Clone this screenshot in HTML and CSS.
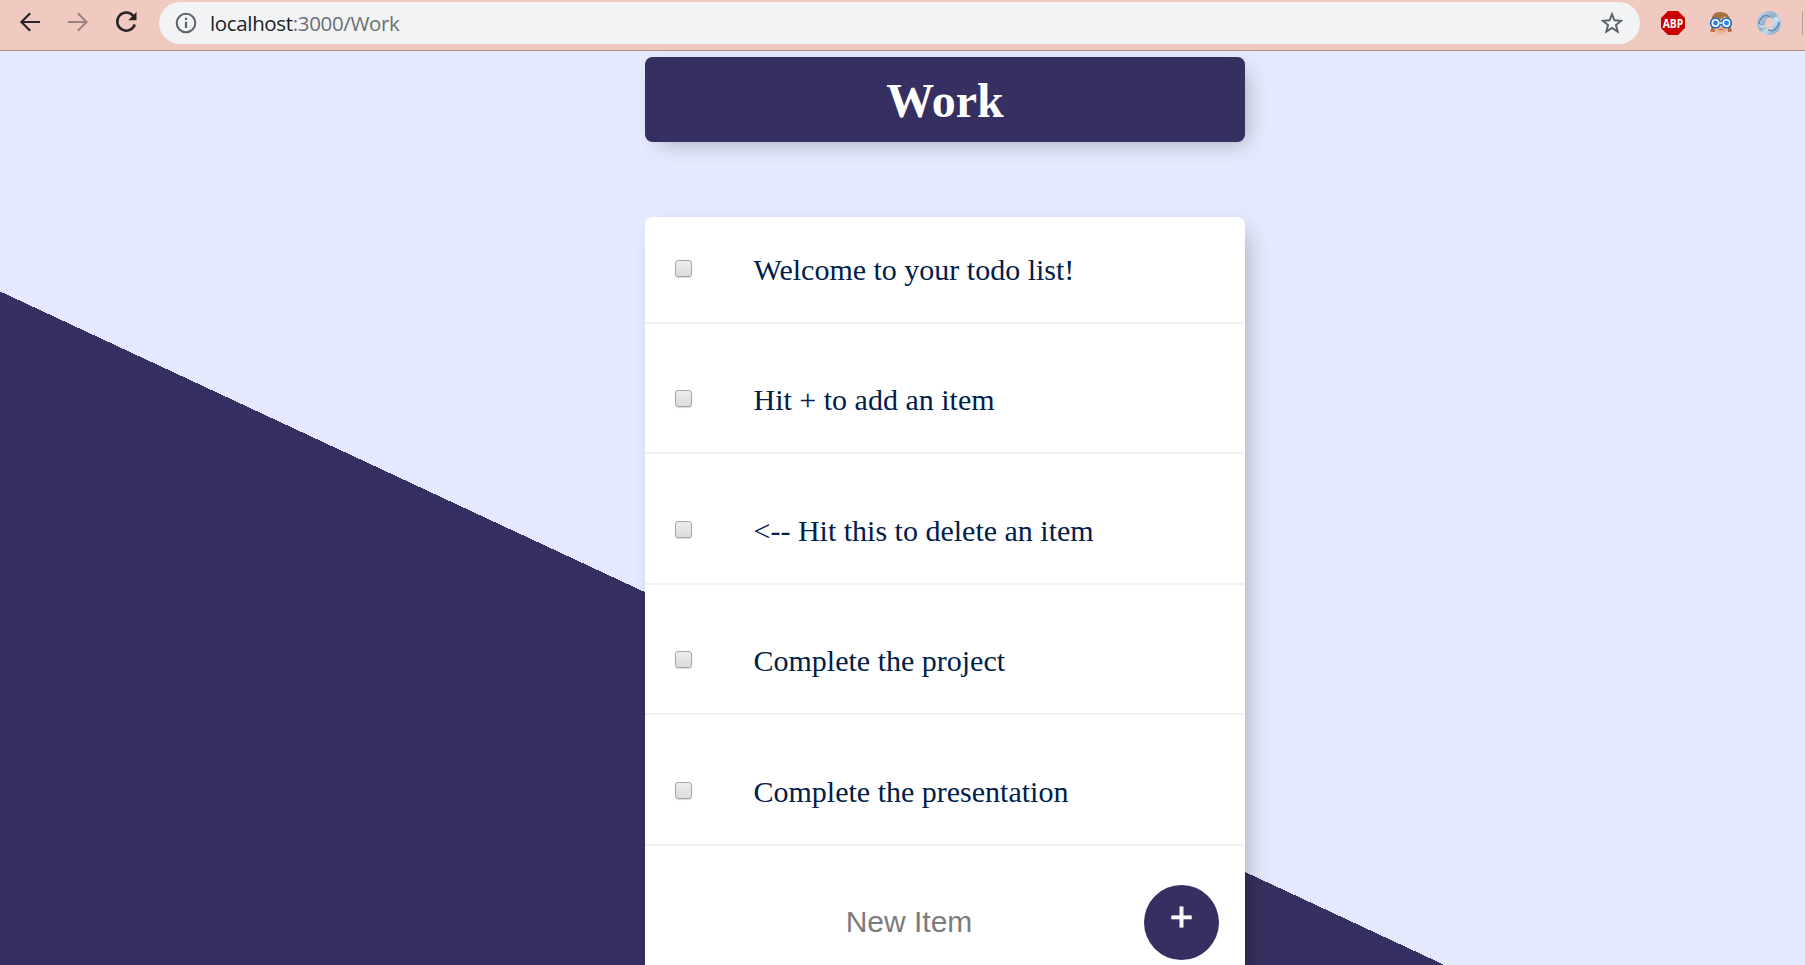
FILE: index.html
```
<!DOCTYPE html>
<html lang="en">
<head>
<meta charset="utf-8">
<title>Work</title>
<link rel="stylesheet" href="styles.css">
</head>
<body>
<header class="toolbar">
  <nav class="nav">
    <svg class="nav-icon" viewBox="0 0 24 24"><path d="M22 12H4M12.200 3.200 3.400 12l8.800 8.800" fill="none" stroke="#272525" stroke-width="2.200"/></svg>
    <svg class="nav-icon" viewBox="0 0 24 24"><path d="M2 12h18M11.800 3.200 20.600 12l-8.800 8.800" fill="none" stroke="#9a8380" stroke-width="2"/></svg>
    <svg class="nav-icon" viewBox="0 0 24 24"><path d="M19.300 6A9 9 0 1 0 20.800 14.500" fill="none" stroke="#272525" stroke-width="2.500"/><path d="M22.500 2v8.200h-8.200z" fill="#272525"/></svg>
  </nav>
  <div class="omnibox">
    <svg class="info" viewBox="0 0 22 22"><circle cx="11" cy="11" r="9.300" fill="none" stroke="#5f6368" stroke-width="2"/><path d="M11 9.800v6.200M11 5.700v2.200" stroke="#5f6368" stroke-width="2.200"/></svg>
    <span class="url"><span class="host">localhost</span>:3000/Work</span>
    <svg class="star" viewBox="0 0 22 22"><path d="M11 2.200l2.500 6.100 6.600.5-5.100 4.300 1.600 6.400L11 16l-5.600 3.500L7 13.100 1.900 8.800l6.600-.5z" fill="none" stroke="#5f6368" stroke-width="2"/></svg>
  </div>
  <div class="extensions">
    <svg class="ext" viewBox="0 0 24 24"><path d="M7 0h10l7 7v10l-7 7H7l-7-7V7z" fill="#c90000"/><text x="12" y="17" text-anchor="middle" class="abp" textLength="20.500" lengthAdjust="spacingAndGlyphs">ABP</text></svg>
    <svg class="ext" viewBox="0 0 24 24"><path d="M1 20.500q2-3 1.500-10Q2 1 11 1t10 8q0 7 2 11.500l-4 .5-1-12H6v12z" fill="#a96f43"/><path d="M5 8q7 1 11-3 1 3 3 4v7q0 6-7 6t-7-6z" fill="#edb08f"/><path d="M5 24q7-5 14 0z" fill="#f3b7a3"/><path d="M9.500 18.500h5" stroke="#bd6b59" stroke-width="1.200"/><g fill="#2684ed" stroke="#1763b8" stroke-width="1.200"><circle cx="6.500" cy="12" r="5"/><circle cx="17.500" cy="12" r="5"/></g><g fill="#2684ed" stroke="#fff" stroke-width="1.500"><circle cx="6.500" cy="12" r="3.200"/><circle cx="17.500" cy="12" r="3.200"/></g><path d="M10.500 12h3" stroke="#fff" stroke-width="1.500"/></svg>
    <svg class="ext" viewBox="0 0 24 24"><defs><linearGradient id="steel" x1="0" y1="0" x2="1" y2="1"><stop offset="0" stop-color="#c6dae9"/><stop offset=".45" stop-color="#8fb0cc"/><stop offset=".6" stop-color="#c9dcea"/><stop offset="1" stop-color="#668fb5"/></linearGradient></defs><path fill-rule="evenodd" d="M12 0a12 12 0 1 1 0 24 12 12 0 0 1 0-24zM13 6Q7.500 8 8.500 14q.5 3 2.500 4.500 5.500-2.500 4.500-8.500Q15 7 13 6z" fill="url(#steel)"/><path d="M13 6Q9 3 5.500 6T2 13M11 18.500q4 3 7.500-.5T22 11" stroke="#5c86ae" stroke-width="1.300" fill="none"/><path d="M8.500 14q-3 3-6 1M15.500 10q2-4 5-2" stroke="#e3eef6" stroke-width="1.200" fill="none"/></svg>
  </div>
  <span class="divider"></span>
</header>
<main class="page">
  <h1 class="heading">Work</h1>
  <section class="list">
    <label class="item"><input class="check" type="checkbox"><span>Welcome to your todo list!</span></label>
    <label class="item"><input class="check" type="checkbox"><span>Hit + to add an item</span></label>
    <label class="item"><input class="check" type="checkbox"><span>&lt;-- Hit this to delete an item</span></label>
    <label class="item"><input class="check" type="checkbox"><span>Complete the project</span></label>
    <label class="item"><input class="check" type="checkbox"><span>Complete the presentation</span></label>
    <form class="new-item">
      <input class="entry" type="text" placeholder="New Item">
      <button class="add" type="button">+</button>
    </form>
  </section>
</main>
</body>
</html>
```
FILE: styles.css
```
* { box-sizing: border-box; }
body {
  margin: 0;
  height: 965px;
  overflow: hidden;
  display: flex;
  flex-direction: column;
  font-family: "Liberation Serif", "Times New Roman", serif;
}
.toolbar {
  height: 51px;
  flex: none;
  display: flex;
  align-items: flex-start;
  padding-left: 18px;
  background: #f0c9c1;
  border-bottom: 1px solid #a98c87;
}
.nav { display: flex; gap: 24px; padding-top: 10px; width: 141px; }
.nav-icon { width: 24px; height: 24px; }
.omnibox {
  width: 1481px;
  height: 42px;
  margin-top: 2px;
  padding: 0 17px 0 16px;
  border-radius: 21px;
  background: #f1f3f4;
  display: flex;
  align-items: center;
}
.info { width: 22px; height: 22px; }
.url {
  flex: 1;
  margin-left: 13px;
  padding-top: 1px;
  font: 20.5px/41px "Open Sans", "Noto Sans", sans-serif;
  letter-spacing: -0.35px;
  color: #6b6f73;
}
.host { color: #202124; }
.star { width: 22px; height: 22px; }
.extensions { display: flex; gap: 24px; padding: 11px 0 0 21px; }
.ext { width: 24px; height: 24px; overflow: visible; }
.abp { font: bold 13px "Open Sans", sans-serif; fill: #fff; }
.divider { width: 1px; height: 24px; margin: 11px 2px 0 auto; background: #b59a96; }
.page {
  flex: 1;
  min-height: 0;
  overflow: hidden;
  padding: 6px 560px 0 645px;
  background: linear-gradient(25deg, #362f61 610.5px, #e4e9fd 610.5px);
}
.heading, .list {
  width: 600px;
  border-radius: 7.5px;
  box-shadow: 7.5px 7.5px 22.5px -7.5px rgba(0, 0, 0, 0.3);
}
.heading {
  height: 85px;
  margin: 0 0 75px;
  font-size: 48px;
  line-height: 87px;
  text-align: center;
  color: #fff;
  background: #362f61;
}
.list { height: 780px; background: #fff; }
.item {
  height: 130.4px;
  padding: 24.6px 0 0 30px;
  display: flex;
  align-items: center;
  border-bottom: 2px solid #f1f1f1;
  font-size: 30px;
  color: #00204a;
}
.item:first-child { height: 107px; padding-top: 0; }
.check {
  appearance: none;
  width: 17px;
  height: 17px;
  margin: 0 61.5px 3px 0;
  border: 1px solid #a6a6a6;
  border-radius: 3px;
  background: linear-gradient(#ededed, #dcdcdc);
  box-shadow: 0 1px 1px rgba(0, 0, 0, 0.15);
}
.new-item { display: flex; padding: 39.4px 26px 0 75px; }
.entry {
  width: 378px;
  height: 75px;
  margin-right: 46px;
  padding: 0 0 1px;
  border: 0;
  background: transparent;
  text-align: center;
  font: 30px "Liberation Sans", Arial, sans-serif;
}
.entry::placeholder { color: #7b7b7b; opacity: 1; }
.add {
  width: 75px;
  height: 75px;
  padding: 0 0 11px;
  border: 0;
  border-radius: 50%;
  background: #362f61;
  color: #fff;
  font: 40px/64px "Liberation Sans", Arial, sans-serif;
  -webkit-text-stroke: 0.8px #fff;
}
```
